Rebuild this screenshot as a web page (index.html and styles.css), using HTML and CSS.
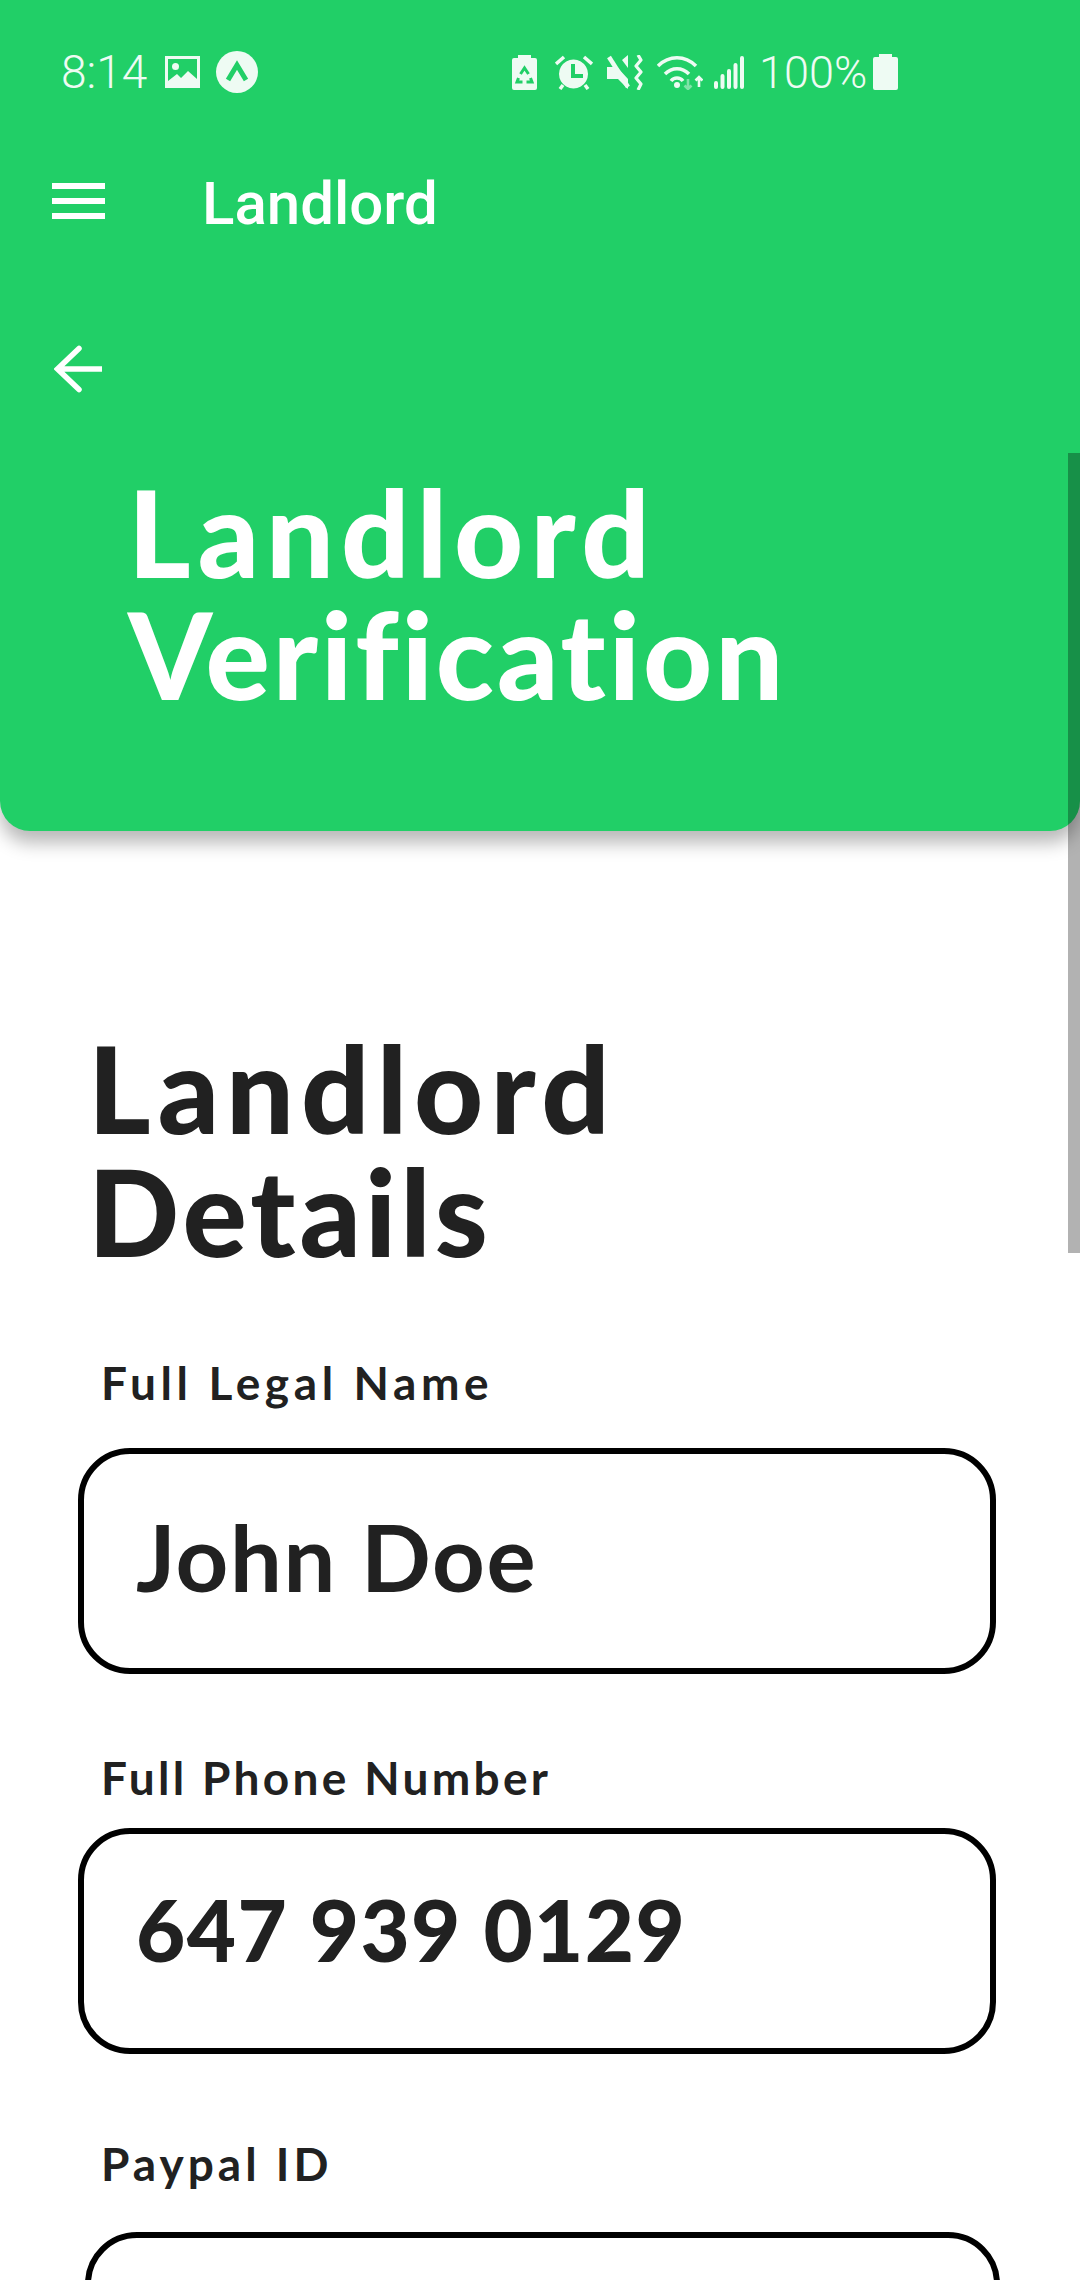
FILE: index.html
```html
<!DOCTYPE html>
<html>
<head>
    <title>Landlord Verification</title>
    <link rel="stylesheet" href="styles.css">
</head>
<body>
    <div class="screen">
        <header class="top-card">
            <div class="status-bar">
                <div class="status-left">
                    <span class="clock">8:14</span>
                    <svg class="icon-image" viewBox="0 0 35 32"><path fill="#eefbf3" fill-rule="evenodd" d="M0 0h35v32H0zM3 3v22l9-7 4 4 7-7 9 8V3z"/><circle cx="10.500" cy="10.500" r="3.500" fill="#eefbf3"/></svg>
                    <svg class="icon-expo" viewBox="0 0 42 42"><circle cx="21" cy="21" r="21" fill="#eefbf3"/><path d="M12 29l9-15 9 15" fill="none" stroke="#21cf67" stroke-width="5"/></svg>
                </div>
                <div class="status-right">
                    <svg class="icon-saver" viewBox="0 0 25 35"><path fill="#eefbf3" d="M6 0h13v3h4q2 0 2 2v28q0 2-2 2H2q-2 0-2-2V5q0-2 2-2h4z"/><path fill="none" stroke="#21cf67" stroke-width="3" d="M8.500 19l4-6 4 6M6.500 23L5 27h5.500M18.500 23l1.500 4h-5.500"/></svg>
                    <svg class="icon-alarm" viewBox="0 0 38 35"><path fill="#eefbf3" fill-rule="evenodd" d="M18.500 4.500a14.500 14.500 0 1 0 .01 0zM16 9h4v10h8v4H16z"/><path fill="none" stroke="#eefbf3" stroke-width="3.500" d="M1 9l8-7M37 9l-8-7M8 30l-3 4M30 30l3 4"/></svg>
                    <svg class="icon-mute" viewBox="0 0 36 35"><path fill="#eefbf3" d="M0 12h10L21 24v10L11 24H0zM15 5l6-5v13z"/><path fill="none" stroke="#eefbf3" stroke-width="4.500" d="M2 2l19 30"/><path fill="none" stroke="#eefbf3" stroke-width="3.200" stroke-linejoin="round" d="M31 0l3 5-5 6 5 6-5 6 5 6-3 6"/></svg>
                    <svg class="icon-wifi" viewBox="0 0 46 35"><g fill="none" stroke="#eefbf3" stroke-width="3.500"><path d="M1 11c11-11 27-11 38 0"/><path d="M8 19c7-7 17-7 24 0"/><path d="M14 26c3-4 9-4 12 0"/></g><circle cx="20" cy="30" r="3" fill="#eefbf3"/><path fill="none" stroke="#7fe3a8" stroke-width="2.600" d="M31 24v10m-3.500-3.500l3.500 3.500 3.500-3.500"/><path fill="none" stroke="#eefbf3" stroke-width="2.600" d="M42 32V22m-3.500 3.500L42 22l3.500 3.500"/></svg>
                    <svg class="icon-signal" viewBox="0 0 32 34"><path fill="none" stroke="#eefbf3" stroke-width="4" stroke-linecap="round" d="M3 28v4M9.500 21v11M16 16v16M22.500 10v22M29 3v29"/></svg>
                    <span class="battery-text">100%</span>
                    <svg class="icon-battery" viewBox="0 0 25 36"><path fill="#eefbf3" d="M6 0h13v3h4q2 0 2 2v29q0 2-2 2H2q-2 0-2-2V5q0-2 2-2h4z"/></svg>
                </div>
            </div>
            <div class="toolbar">
                <div class="menu-icon"><span></span><span></span><span></span></div>
                <div class="toolbar-title">Landlord</div>
            </div>
            <div class="back-row">
                <svg class="icon-back" viewBox="0 0 48 48"><path fill="none" stroke="#fff" stroke-width="5.500" stroke-linecap="round" d="M47 24H4M25 3.500L3.500 24 25 44.500"/></svg>
            </div>
            <h1 class="page-title"><span class="title-wide">Landlord</span><br><span class="title-tight">Verification</span></h1>
        </header>

        <main class="details">
            <h2 class="section-title"><span class="title-wide">Landlord</span><br><span class="details-word">Details</span></h2>

            <div class="field-label legal-label">Full Legal Name</div>
            <div class="field-box name-box">John Doe</div>

            <div class="field-label phone-label">Full Phone Number</div>
            <div class="field-box phone-box">647 939 0129</div>

            <div class="field-label paypal-label">Paypal ID</div>
            <div class="field-box paypal-box"></div>
        </main>

        <div class="scroll-thumb"></div>
    </div>
</body>
</html>
```

FILE: styles.css
```css
html, body {
    margin: 0;
    padding: 0;
    background-color: #fff;
}

.screen {
    position: relative;
    width: 1080px;
    height: 2280px;
    overflow: hidden;
    font-family: Lato, sans-serif;
    color: #212121;
}

.top-card {
    height: 831px;
    box-sizing: border-box;
    background-color: #21cf67;
    border-radius: 0 0 30px 30px;
    box-shadow: 0 12px 18px rgba(0, 0, 0, 0.28);
    color: #fff;
}

.status-bar {
    height: 144px;
    display: flex;
    align-items: center;
    font-family: Roboto, sans-serif;
    font-weight: 300;
    color: #eefbf3;
}

.status-left {
    display: flex;
    align-items: center;
    margin-left: 61px;
}

.clock {
    font-size: 46px;
    width: 104px;
}

.icon-image {
    width: 35px;
    height: 32px;
}

.icon-expo {
    width: 42px;
    height: 42px;
    margin-left: 16px;
}

.status-right {
    display: flex;
    align-items: center;
    margin-left: 254px;
}

.icon-saver {
    width: 25px;
    height: 35px;
}

.icon-alarm {
    width: 38px;
    height: 35px;
    margin-left: 18px;
}

.icon-mute {
    width: 36px;
    height: 35px;
    margin-left: 14px;
}

.icon-wifi {
    width: 46px;
    height: 35px;
    margin-left: 14px;
}

.icon-signal {
    width: 32px;
    height: 34px;
    margin-left: 10px;
}

.battery-text {
    font-size: 45px;
    margin-left: 14px;
    width: 114px;
}

.icon-battery {
    width: 25px;
    height: 36px;
}

.toolbar {
    height: 114px;
    display: flex;
    align-items: center;
}

.menu-icon {
    width: 53px;
    margin-left: 52px;
    display: flex;
    flex-direction: column;
    gap: 9px;
}

.menu-icon span {
    display: block;
    height: 6px;
    background-color: #fff;
}

.toolbar-title {
    font-family: Roboto, sans-serif;
    font-weight: 500;
    font-size: 60px;
    margin-left: 97px;
    padding-top: 4px;
}

.back-row {
    height: 213px;
    box-sizing: border-box;
    padding: 87px 0 0 54px;
}

.icon-back {
    display: block;
    width: 48px;
    height: 48px;
}

.page-title {
    margin: 0 0 0 128px;
    font-size: 120px;
    line-height: 122px;
    font-weight: 900;
}

.title-wide {
    letter-spacing: 7px;
}

.title-tight {
    letter-spacing: 3px;
}

.details {
    padding: 0 0 0 78px;
}

.section-title {
    margin: 196px 0 82px 10px;
    font-size: 120px;
    line-height: 123px;
    font-weight: 900;
}

.details-word {
    letter-spacing: 4px;
}

.field-label {
    margin: 76px 0 0 23px;
    font-size: 46px;
    font-weight: 700;
    letter-spacing: 4px;
    line-height: 56px;
}

.legal-label {
    letter-spacing: 4.600px;
}

.phone-label {
    letter-spacing: 3.300px;
}

.paypal-label {
    margin-top: 82px;
}

.field-box {
    box-sizing: border-box;
    width: 918px;
    height: 226px;
    border: 6px solid #000;
    border-radius: 52px;
    padding: 44px 0 0 52px;
    font-weight: 700;
}

.name-box {
    font-size: 92px;
    letter-spacing: 1.6px;
    margin-top: 37px;
    padding-top: 47px;
}

.phone-box {
    font-size: 85px;
    font-weight: 900;
    letter-spacing: 1.4px;
    margin-top: 22px;
}

.paypal-box {
    width: 915px;
    margin: 40px 0 0 7px;
}

.scroll-thumb {
    position: absolute;
    top: 453px;
    right: 0;
    width: 12px;
    height: 800px;
    background-color: rgba(0, 0, 0, 0.3);
}
```
